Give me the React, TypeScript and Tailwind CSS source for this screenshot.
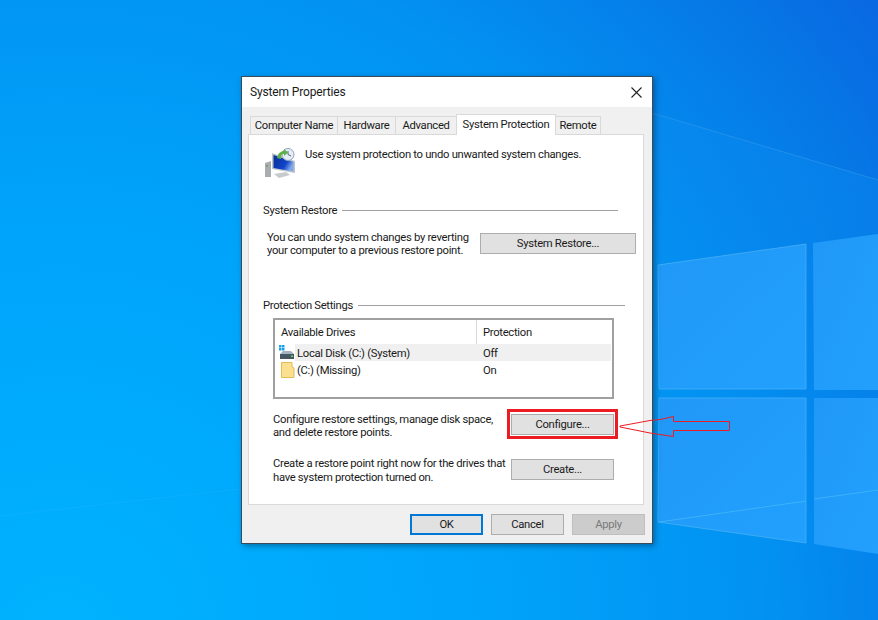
import React from 'react';

const Wallpaper = () => (
  <svg className="absolute inset-0" width="878" height="620" viewBox="0 0 878 620">
    <defs>
      <radialGradient id="bg" gradientUnits="userSpaceOnUse" cx="60" cy="640" r="1080">
        <stop offset="0" stopColor="#00b3ff" />
        <stop offset="0.4" stopColor="#00a3fa" />
        <stop offset="0.65" stopColor="#0292f2" />
        <stop offset="0.85" stopColor="#0678e6" />
        <stop offset="1" stopColor="#0a62e0" />
      </radialGradient>
      <linearGradient id="pane" x1="0" y1="0" x2="1" y2="1">
        <stop offset="0" stopColor="#2098f8" />
        <stop offset="1" stopColor="#22a0fd" />
      </linearGradient>
      <linearGradient id="edge" x1="0" y1="0" x2="0" y2="1">
        <stop offset="0" stopColor="#4fb8f5" />
        <stop offset="1" stopColor="#45e6e8" />
      </linearGradient>
      <linearGradient id="beam" gradientUnits="userSpaceOnUse" x1="0" y1="113" x2="0" y2="540">
        <stop offset="0" stopColor="#0a8cf0" stopOpacity="0.4" />
        <stop offset="1" stopColor="#0a8cf0" stopOpacity="0" />
      </linearGradient>
    </defs>
    <rect width="878" height="620" fill="url(#bg)" />
    {/* soft beams */}
    <polygon points="652,113 878,180 878,620 652,620" fill="url(#beam)" />
    <line x1="652" y1="113" x2="878" y2="180" stroke="#3aa0ee" strokeOpacity="0.5" />
    <line x1="0" y1="516" x2="242" y2="489" stroke="#40c4ff" strokeOpacity="0.15" />
    {/* windows logo */}
    <polygon points="658,265 806,244 806,389 659,389" fill="url(#pane)" stroke="#4fb4f5" strokeOpacity="0.7" />
    <polygon points="813,243 878,234 878,390 814,390" fill="url(#pane)" />
    <polygon points="659,398 806,398 806,543 658,522" fill="url(#pane)" stroke="#4fb4f5" strokeOpacity="0.7" />
    <polygon points="814,398 878,398 878,554 814,544" fill="url(#pane)" />
    <line x1="659" y1="522" x2="806" y2="501" stroke="#4fc0f5" strokeOpacity="0.6" />
    <line x1="814" y1="499" x2="878" y2="490" stroke="#4fc0f5" strokeOpacity="0.6" />
    <line x1="659" y1="398" x2="659" y2="522" stroke="url(#edge)" strokeWidth="2" />
  </svg>
);

const DriveIcon = () => (
  <svg width="16" height="15" viewBox="0 0 16 15">
    <rect x="0" y="0" width="2.5" height="2.5" fill="#18a0e8" />
    <rect x="3" y="0" width="2.5" height="2.5" fill="#18a0e8" />
    <rect x="0" y="3" width="2.5" height="2.5" fill="#18a0e8" />
    <rect x="3" y="3" width="2.5" height="2.5" fill="#18a0e8" />
    <path d="M4 6 L12 6 L15 9 L1 9 Z" fill="#a4b3bf" />
    <rect x="1" y="9" width="14" height="5" fill="#465663" />
    <rect x="12" y="10.5" width="2" height="1.5" fill="#5ce05c" />
  </svg>
);

const FolderIcon = () => (
  <svg width="14" height="16" viewBox="0 0 14 16">
    <path d="M0.5 0.5 H11 V5 L13 6 V15.5 H0.5 Z" fill="#fbe08f" stroke="#e2bc55" />
  </svg>
);

const RestoreIcon = () => (
  <svg width="32" height="30" viewBox="0 0 32 30">
    <defs>
      <linearGradient id="screen" x1="0" y1="0" x2="1" y2="0.5">
        <stop offset="0" stopColor="#0a2f96" />
        <stop offset="0.7" stopColor="#1244c8" />
        <stop offset="1" stopColor="#7ea6ea" />
      </linearGradient>
    </defs>
    <path d="M2 15 L8 13 V29 L2 29 Z" fill="#a9adb0" />
    <rect x="3" y="17" width="2" height="1.5" fill="#6fa050" />
    <path d="M11 26 L23 24 L27 27 L16 30 Z" fill="#c7cbce" />
    <path d="M9 5 L32 13 L32 25 L9 21 Z" fill="#bcc5cc" />
    <path d="M10.5 7 L30.5 14 L30.5 23.5 L10.5 20 Z" fill="url(#screen)" />
    <circle cx="25" cy="6.5" r="6" fill="#e6edf6" stroke="#8ea3bb" />
    <path d="M25 3 V6.5 L28 8" stroke="#51667e" fill="none" />
    <path d="M14 10 C15 5 18 3 21 3 L21 1 L25 4.5 L21 8 L21 6 C19 6 18 7 18 11 Z" fill="#5db04a" />
  </svg>
);

const Tab = ({ label, active, w }: { label: string; active?: boolean; w: string }) =>
  active ? (
    <div className={`${w} h-[21px] -mb-px -mr-px relative z-10 flex items-center justify-center whitespace-nowrap bg-white border border-b-0 border-[#d9d9d9]`}>
      {label}
    </div>
  ) : (
    <div className={`${w} h-[18px] mt-[2px] pt-px -mr-px flex items-center justify-center whitespace-nowrap bg-[#f0f0f0] border border-b-0 border-[#d9d9d9]`}>
      {label}
    </div>
  );

const Btn = ({ label, w, cls = '' }: { label: string; w: string; cls?: string }) => (
  <div className={`${w} h-[21px] shrink-0 flex items-center justify-center bg-[#e1e1e1] border border-[#adadad] ${cls}`}>{label}</div>
);

const GroupTitle = ({ label, w, cls = '' }: { label: string; w: string; cls?: string }) => (
  <div className={`flex items-center gap-[5px] h-[16px] ${w} ${cls}`}>
    <span className="whitespace-nowrap pt-[2px]">{label}</span>
    <div className="flex-1 h-px bg-[#a0a0a0]" />
  </div>
);

const TwoLines = ({ a, b, cls }: { a: string; b: string; cls: string }) => (
  <div className={`${cls} whitespace-nowrap`}>
    {a}
    <br />
    {b}
  </div>
);

const App = () => (
  <div className="relative w-[878px] h-[620px] overflow-hidden font-['Roboto',sans-serif] text-[11.25px] tracking-[-0.3px] leading-[16px] text-[#1a1a1a]">
    <Wallpaper />

    {/* dialog window */}
    <div className="absolute left-[241px] top-[76px] w-[412px] h-[468px] flex flex-col bg-[#f0f0f0] border border-[#3a4a58] shadow-[2px_2px_6px_rgba(0,0,0,0.35)]">
      <div className="h-[30px] shrink-0 bg-white flex items-center justify-between pl-[8px] pr-[10px]">
        <span className="text-[12px] tracking-[-0.15px]">System Properties</span>
        <svg width="11" height="11" viewBox="0 0 11 11" stroke="#222" strokeWidth="1.1">
          <path d="M0.5 0.5 L10.5 10.5 M10.5 0.5 L0.5 10.5" />
        </svg>
      </div>

      <div className="flex pl-[8px] pt-[7px] h-[27px] shrink-0">
        <Tab label="Computer Name" w="w-[88px]" />
        <Tab label="Hardware" w="w-[59px]" />
        <Tab label="Advanced" w="w-[62px]" />
        <Tab label="System Protection" w="w-[100px]" active />
        <Tab label="Remote" w="w-[46px]" />
      </div>

      <div className="ml-[6px] mr-[8px] h-[371px] shrink-0 bg-white border border-[#d9d9d9] pl-[14px]">
        <div className="flex items-start pt-[13px] h-[67px]">
          <RestoreIcon />
          <span className="ml-[10px] -mt-[1px] whitespace-nowrap">Use system protection to undo unwanted system changes.</span>
        </div>

        <GroupTitle label="System Restore" w="w-[355px]" />
        <div className="flex mt-[15px] pl-[4px] items-center h-[21px]">
          <TwoLines cls="w-[213px] leading-[13px]" a="You can undo system changes by reverting" b="your computer to a previous restore point." />
          <Btn label="System Restore..." w="w-[156px]" />
        </div>

        <GroupTitle label="Protection Settings" w="w-[362px]" cls="mt-[43px]" />
        <div className="ml-[10px] mt-[5px] w-[341px] h-[81px] border-2 border-[#a0a0a0] flex flex-col">
          <div className="flex h-[24px] shrink-0">
            <div className="w-[202px] pl-[6px] pt-[2px] flex items-center border-r border-[#d9d9d9]">Available Drives</div>
            <div className="pl-[6px] pt-[2px] flex items-center">Protection</div>
          </div>
          <div className="flex items-center h-[17px] ml-[4px] mr-[1px]">
            <DriveIcon />
            <div className="flex flex-1 items-center bg-[#f0f0f0] h-[17px] pl-[2px] pt-[2px]">
              <span className="w-[186px]">Local Disk (C:) (System)</span>
              <span>Off</span>
            </div>
          </div>
          <div className="flex items-center h-[17px] ml-[6px]">
            <FolderIcon />
            <div className="flex flex-1 items-center h-[17px] pl-[2px] pt-[2px]">
              <span className="w-[186px]">(C:) (Missing)</span>
              <span>On</span>
            </div>
          </div>
        </div>

        <div className="flex ml-[10px] mt-[15px] items-center h-[21px]">
          <TwoLines cls="w-[238px] pt-[2px] leading-[13px]" a="Configure restore settings, manage disk space," b="and delete restore points." />
          {/* red highlight box drawn on the screenshot */}
          <div className="relative">
            <Btn label="Configure..." w="w-[103px]" />
            <div className="absolute -left-[4px] -right-[4px] -top-[5px] -bottom-[4px] border-[3px] border-[#ed1c24]" />
          </div>
        </div>

        <div className="flex ml-[10px] mt-[24px] items-center h-[21px]">
          <TwoLines cls="w-[238px] pt-[2px] leading-[14px]" a="Create a restore point right now for the drives that" b="have system protection turned on." />
          <Btn label="Create..." w="w-[103px]" />
        </div>
      </div>

      <div className="flex justify-end gap-[8px] pr-[7px] pt-[9px]">
        <Btn label="OK" w="w-[73px]" cls="!border-2 !border-[#0078d7]" />
        <Btn label="Cancel" w="w-[73px]" />
        <Btn label="Apply" w="w-[73px]" cls="!bg-[#cccccc] !border-[#bfbfbf] text-[#7a7a7a]" />
      </div>
    </div>

    {/* arrow annotation */}
    <svg className="absolute left-[615px] top-[410px]" width="120" height="30" viewBox="0 0 120 30" fill="none" stroke="#ed1c24">
      <path d="M5 16 L35 10.5 L45 9.5 L58.5 6.5 L58.5 11.5 L114.5 11.5 L114.5 20.5 L58.5 20.5 L58.5 26.5 L45 24.5 L35 23 L5 17 Z" />
    </svg>
  </div>
);

export default App;
